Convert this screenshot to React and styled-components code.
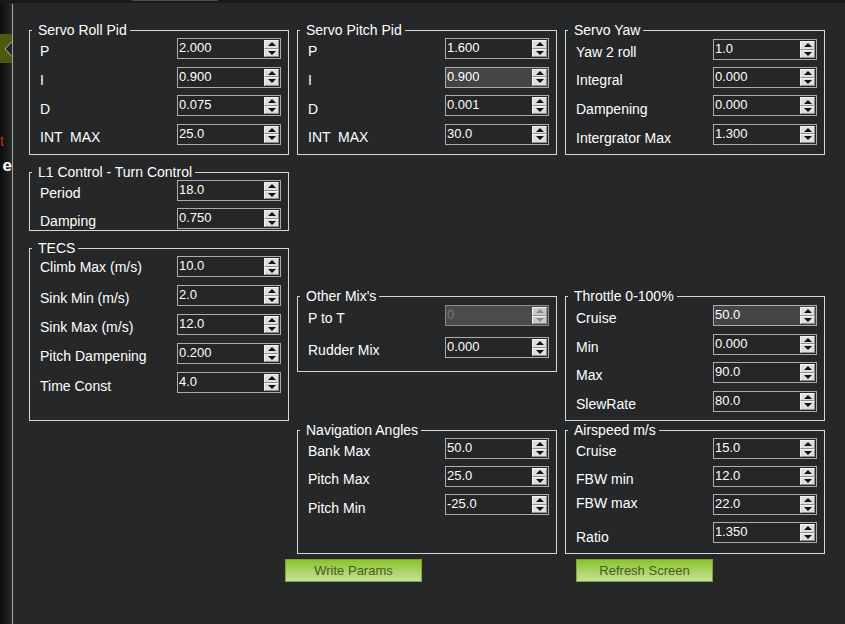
import React from 'react'
import styled, { createGlobalStyle } from 'styled-components'

const BG = '#262729'

const GlobalStyle = createGlobalStyle`
  html, body {
    margin: 0;
    padding: 0;
    background: ${BG};
  }
  body {
    font-family: "Liberation Sans", Arial, sans-serif;
  }
`

const Page = styled.div`
  width: 845px;
  height: 624px;
  display: flex;
  flex-direction: column;
  background: ${BG};
  overflow: hidden;
`

const TopStrip = styled.div`
  height: 3px;
  background: #1c1a18;
  display: flex;
`

const TopTab = styled.div`
  margin-left: 132px;
  width: 86px;
  height: 1px;
  background: #4c4c4c;
`

const Body = styled.div`
  flex: 1;
  display: flex;
`

const Sidebar = styled.div`
  width: 12px;
  display: flex;
  flex-direction: column;
  background: linear-gradient(to right, #0b0b0b, #1c1c1c 60%, #2a2a2a);
`

const SideTab = styled.div`
  margin-top: 31px;
  height: 29px;
  background: #4b5a10;
  display: flex;
  justify-content: flex-end;
  align-items: center;
`

const SideItem = styled.div`
  margin-top: ${p => p.$top}px;
  height: 17px;
  line-height: 17px;
  overflow: hidden;
  white-space: nowrap;
  direction: rtl;
  text-align: right;
  padding-right: ${p => p.$pr}px;
  color: ${p => p.$color};
  font-size: ${p => (p.$bold ? 17 : 14)}px;
  font-weight: ${p => (p.$bold ? 700 : 400)};
`

const Divider = styled.div`
  width: 1px;
  margin-top: 1px;
  background: #a6a6a6;
`

const Main = styled.div`
  flex: 1;
  padding: 27px 0 0 16px;
  display: grid;
  grid-template-columns: repeat(3, 260px);
  column-gap: 8px;
  align-items: start;
`

const Column = styled.div`
  display: flex;
  flex-direction: column;
`

const Group = styled.div`
  box-sizing: border-box;
  margin-top: ${p => p.$mt}px;
  height: ${p => p.$h}px;
  border: 1px solid #d6d6d6;
`

const Title = styled.div`
  width: fit-content;
  margin: -9px 0 -7px 2px;
  padding: 0 3px 0 6px;
  background: ${BG};
  color: #fff;
  font-size: 14px;
  line-height: 16px;
  white-space: nowrap;
`

const Rows = styled.div`
  padding-top: ${p => p.$pt}px;
  display: flex;
  flex-direction: column;
  gap: ${p => p.$gap}px;
`

const Row = styled.div`
  display: grid;
  grid-template-columns: 137px 104px;
  padding-left: 10px;
  height: 21px;
`

const Label = styled.div`
  margin-top: ${p => 5 + (p.$dy || 0)}px;
  color: #fff;
  font-size: 14px;
  line-height: 16px;
  white-space: pre;
`

const Spin = styled.div`
  box-sizing: border-box;
  height: 21px;
  display: flex;
  border: 1px solid ${p => (p.$disabled ? '#8a8a8a' : '#adadad')};
  background: ${p => (p.$disabled ? '#4b4b4b' : p.$focus ? '#444446' : '#262626')};
`

const Value = styled.div`
  flex: 1;
  padding: 1px 0 0 1px;
  color: ${p => (p.$disabled ? '#7c7c7c' : '#fff')};
  font-size: 13px;
  line-height: 16px;
`

const SpinButtons = styled.div`
  width: 15px;
  margin: 1px 1px 1px 0;
  display: flex;
  flex-direction: column;
`

const SpinButton = styled.div`
  box-sizing: border-box;
  flex: 1;
  display: flex;
  align-items: center;
  justify-content: center;
  background: ${p => (p.$disabled ? '#c9c9c9' : '#dedede')};
  border: 1px solid;
  border-color: #f4f4f4 #8e8e8e #8e8e8e #f4f4f4;
`

const Arrow = styled.div`
  width: 0;
  height: 0;
  border-left: 4px solid transparent;
  border-right: 4px solid transparent;
  ${p => (p.$down ? 'border-top' : 'border-bottom')}: 4px solid ${p => (p.$disabled ? '#8a8a8a' : '#111')};
`

const ActionButton = styled.button`
  box-sizing: border-box;
  margin: 5px 0 0 ${p => p.$ml}px;
  width: 137px;
  height: 23px;
  padding: 0;
  border: 1px solid #79a82a;
  background: linear-gradient(to bottom, #8bc32c, #c6e19c);
  color: #4a5a1c;
  font-family: "Liberation Sans", Arial, sans-serif;
  font-size: 13px;
  line-height: 21px;
  cursor: pointer;
`

const columns = [
  {
    groups: [
      { title: 'Servo Roll Pid', mt: 0, h: 125, pt: 7, gap: 7.5,
        rows: [['P', '2.000'], ['I', '0.900'], ['D', '0.075', { dy: 1 }], ['INT  MAX', '25.0']] },
      { title: 'L1 Control - Turn Control', mt: 17, h: 59, pt: 7, gap: 7,
        rows: [['Period', '18.0'], ['Damping', '0.750']] },
      { title: 'TECS', mt: 17, h: 173, pt: 7, gap: 8,
        rows: [['Climb Max (m/s)', '10.0', { dy: -2 }], ['Sink Min (m/s)', '2.0'], ['Sink Max (m/s)', '12.0'],
          ['Pitch Dampening', '0.200'], ['Time Const', '4.0', { dy: 1 }]] },
    ],
  },
  {
    groups: [
      { title: 'Servo Pitch Pid', mt: 0, h: 125, pt: 7, gap: 7.5,
        rows: [['P', '1.600'], ['I', '0.900', { focus: true }], ['D', '0.001', { dy: 1 }], ['INT  MAX', '30.0']] },
      { title: "Other Mix's", mt: 141, h: 76, pt: 8, gap: 11,
        rows: [['P to T', '0', { disabled: true }], ['Rudder Mix', '0.000']] },
      { title: 'Navigation Angles', mt: 58, h: 124, pt: 7, gap: 7,
        rows: [['Bank Max', '50.0'], ['Pitch Max', '25.0'], ['Pitch Min', '-25.0', { dy: 1 }]] },
    ],
    button: { label: 'Write Params', ml: -12 },
  },
  {
    groups: [
      { title: 'Servo Yaw', mt: 0, h: 125, pt: 8, gap: 7.2,
        rows: [['Yaw 2 roll', '1.0'], ['Integral', '0.000'], ['Dampening', '0.000', { dy: 1 }], ['Intergrator Max', '1.300', { dy: 1 }]] },
      { title: 'Throttle 0-100%', mt: 141, h: 125, pt: 8, gap: 7.5,
        rows: [['Cruise', '50.0', { focus: true }], ['Min', '0.000'], ['Max', '90.0'], ['SlewRate', '80.0']] },
      { title: 'Airspeed m/s', mt: 9, h: 124, pt: 7, gap: 7,
        rows: [['Cruise', '15.0'], ['FBW min', '12.0'], ['FBW max', '22.0', { dy: -4 }], ['Ratio', '1.350', { dy: 2 }]] },
    ],
    button: { label: 'Refresh Screen', ml: 11 },
  },
]

function SpinBox({ value, focus, disabled }) {
  return (
    <Spin $focus={focus} $disabled={disabled}>
      <Value $disabled={disabled}>{value}</Value>
      <SpinButtons>
        <SpinButton $disabled={disabled}><Arrow $disabled={disabled} /></SpinButton>
        <SpinButton $disabled={disabled}><Arrow $down $disabled={disabled} /></SpinButton>
      </SpinButtons>
    </Spin>
  )
}

function GroupBox({ group }) {
  return (
    <Group $mt={group.mt} $h={group.h}>
      <Title>{group.title}</Title>
      <Rows $pt={group.pt} $gap={group.gap}>
        {group.rows.map(([label, value, opts = {}], idx) => (
          <Row key={idx}>
            <Label $dy={opts.dy}>{label}</Label>
            <SpinBox value={value} focus={opts.focus} disabled={opts.disabled} />
          </Row>
        ))}
      </Rows>
    </Group>
  )
}

export default function App() {
  return (
    <Page>
      <GlobalStyle />
      <TopStrip><TopTab /></TopStrip>
      <Body>
        <Sidebar>
          <SideTab>
            <svg width="8" height="16" viewBox="0 0 8 16">
              <polygon points="8,0.5 1,8 8,15.5" fill={BG} />
              <polyline points="8,0.5 1,8 8,15.5" fill="none" stroke="#b4b4b4" strokeWidth="1" />
            </svg>
          </SideTab>
          <SideItem $top={70} $pr={8} $color="#c8281e">Alt</SideItem>
          <SideItem $top={7} $pr={0} $color="#fff" $bold>e</SideItem>
        </Sidebar>
        <Divider />
        <Main>
          {columns.map((col, idx) => (
            <Column key={idx}>
              {col.groups.map(g => <GroupBox key={g.title} group={g} />)}
              {col.button && <ActionButton $ml={col.button.ml}>{col.button.label}</ActionButton>}
            </Column>
          ))}
        </Main>
      </Body>
    </Page>
  )
}
